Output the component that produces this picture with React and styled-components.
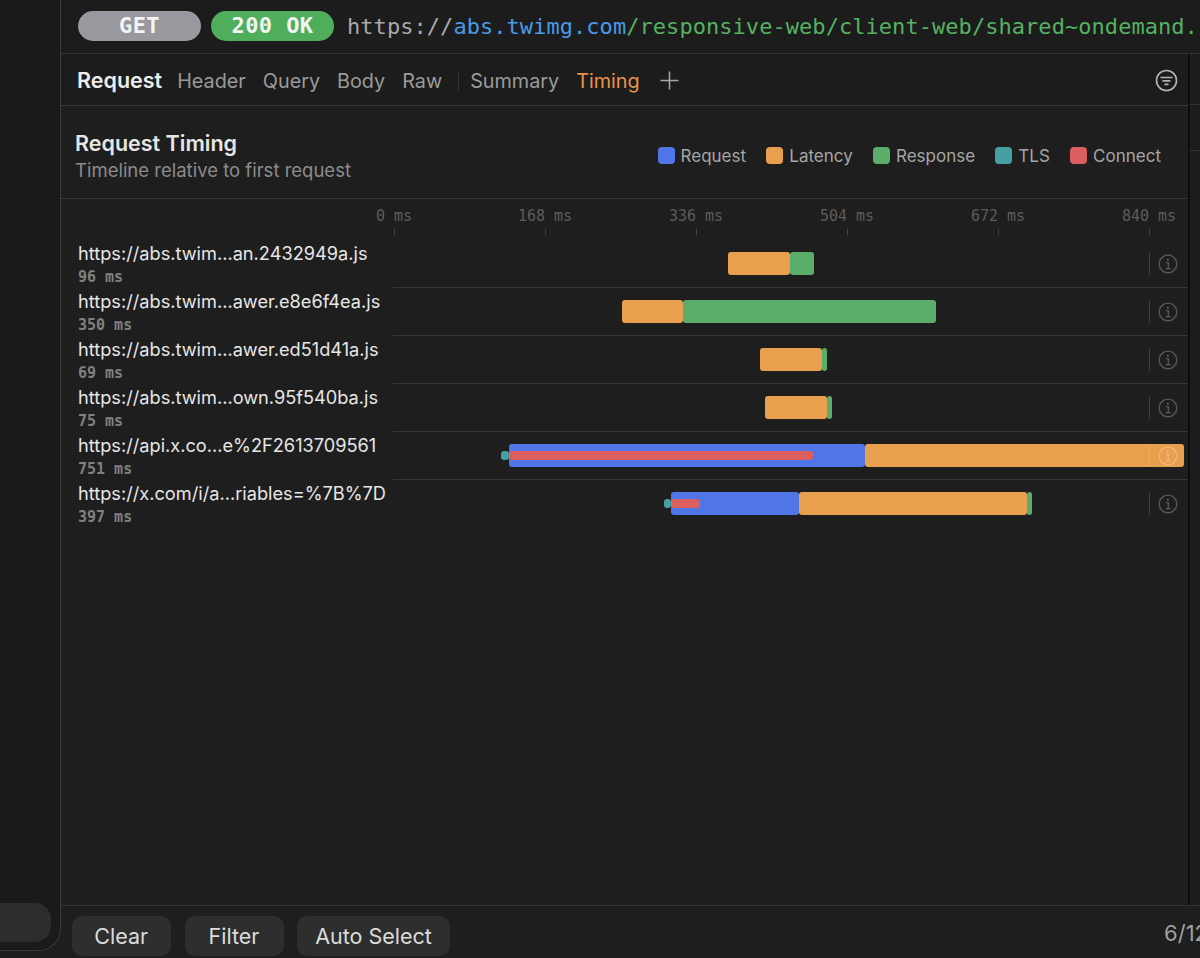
import React from "react";
import styled, { createGlobalStyle } from "styled-components";

const MONO = `"DejaVu Sans Mono", "Liberation Mono", monospace`;
const SANS = `Inter, "Liberation Sans", sans-serif`;

const COLORS = {
  request: "#4f75e6",
  latency: "#e8a04f",
  response: "#5bad69",
  tls: "#45a0a3",
  connect: "#dc5f60",
};

const LEGEND = [
  { kind: "request", label: "Request" },
  { kind: "latency", label: "Latency" },
  { kind: "response", label: "Response" },
  { kind: "tls", label: "TLS" },
  { kind: "connect", label: "Connect" },
];

const TICKS = ["0 ms", "168 ms", "336 ms", "504 ms", "672 ms", "840 ms"];

// from / to are x positions inside the track, track starts at x=393
const ROWS = [
  {
    url: "https://abs.twim…an.2432949a.js",
    time: "96 ms",
    bars: [
      { kind: "latency", from: 335, to: 397 },
      { kind: "response", from: 397, to: 421 },
    ],
  },
  {
    url: "https://abs.twim…awer.e8e6f4ea.js",
    time: "350 ms",
    bars: [
      { kind: "latency", from: 229, to: 290 },
      { kind: "response", from: 290, to: 543 },
    ],
  },
  {
    url: "https://abs.twim…awer.ed51d41a.js",
    time: "69 ms",
    bars: [
      { kind: "latency", from: 367, to: 429 },
      { kind: "response", from: 429, to: 434 },
    ],
  },
  {
    url: "https://abs.twim…own.95f540ba.js",
    time: "75 ms",
    bars: [
      { kind: "latency", from: 372, to: 434 },
      { kind: "response", from: 434, to: 439 },
    ],
  },
  {
    url: "https://api.x.co…e%2F2613709561",
    time: "751 ms",
    bars: [
      { kind: "tls", from: 108, to: 116, thin: true },
      { kind: "request", from: 116, to: 472 },
      { kind: "latency", from: 472, to: 791 },
      { kind: "connect", from: 116, to: 420, thin: true },
    ],
  },
  {
    url: "https://x.com/i/a…riables=%7B%7D",
    time: "397 ms",
    bars: [
      { kind: "tls", from: 271, to: 278, thin: true },
      { kind: "request", from: 278, to: 406 },
      { kind: "latency", from: 406, to: 634 },
      { kind: "response", from: 634, to: 639 },
      { kind: "connect", from: 278, to: 307, thin: true },
    ],
  },
];

function InfoIcon() {
  return (
    <svg width="20" height="20" viewBox="0 0 20 20" fill="none" stroke="currentColor">
      <circle cx="10" cy="10" r="8.8" strokeWidth="1.3" />
      <circle cx="9.8" cy="5.8" r="1.1" fill="currentColor" stroke="none" />
      <path d="M8 8.6h2.3v6M7.7 14.7h5" strokeWidth="1.3" />
    </svg>
  );
}

function FilterIcon() {
  return (
    <svg width="23" height="23" viewBox="0 0 23 23" fill="none" stroke="#b4b4b4">
      <circle cx="11.5" cy="11.5" r="10" strokeWidth="1.6" />
      <path d="M5.5 8.5h12M7.5 11.9h8M9.5 15.3h4" strokeWidth="1.7" />
    </svg>
  );
}

function PlusIcon() {
  return (
    <svg width="19" height="19" viewBox="0 0 19 19" stroke="#a8a8a8" strokeWidth="1.5">
      <path d="M9.5 0.5v18M0.5 9.5h18" />
    </svg>
  );
}

export default function App() {
  return (
    <>
      <GlobalStyle />
      <Page>
        <Sidebar>
          <SearchPill />
        </Sidebar>
        <Main>
          <TopBar>
            <Pill $bg="#98989e">GET</Pill>
            <Pill $bg="#4fae5b">200 OK</Pill>
            <Url>
              https://<UrlHost>abs.twimg.com</UrlHost>
              <UrlPath>/responsive-web/client-web/shared~ondemand.</UrlPath>
            </Url>
          </TopBar>
          <Body>
            <Panel>
              <Tabs>
                <ActiveTab>Request</ActiveTab>
                <Tab $ml={15}>Header</Tab>
                <Tab>Query</Tab>
                <Tab>Body</Tab>
                <Tab>Raw</Tab>
                <TabDivider />
                <Tab $ml={0}>Summary</Tab>
                <Tab $color="#e9924a">Timing</Tab>
                <PlusWrap>
                  <PlusIcon />
                </PlusWrap>
                <FilterWrap>
                  <FilterIcon />
                </FilterWrap>
              </Tabs>
              <Header>
                <div>
                  <Title>Request Timing</Title>
                  <Subtitle>Timeline relative to first request</Subtitle>
                </div>
                <Legend>
                  {LEGEND.map((item) => (
                    <LegendItem key={item.kind}>
                      <Swatch $kind={item.kind} />
                      {item.label}
                    </LegendItem>
                  ))}
                </Legend>
              </Header>
              <Ruler>
                {TICKS.map((tick) => (
                  <RulerCell key={tick}>
                    {tick}
                    <Tick />
                  </RulerCell>
                ))}
              </Ruler>
              {ROWS.map((row, i) => (
                <Row key={row.url}>
                  <RowLabel>
                    <RowUrl>{row.url}</RowUrl>
                    <RowTime>{row.time}</RowTime>
                  </RowLabel>
                  <Track $last={i === ROWS.length - 1}>
                    {row.bars.map((bar) => (
                      <Bar
                        key={bar.kind}
                        $kind={bar.kind}
                        $thin={bar.thin}
                        style={{ left: bar.from, width: bar.to - bar.from }}
                      />
                    ))}
                    <InfoSlot>
                      <InfoIcon />
                    </InfoSlot>
                  </Track>
                </Row>
              ))}
            </Panel>
            <SideStub>
              <StubLine $h={51} />
              <StubLine $h={46} />
            </SideStub>
          </Body>
          <Footer>
            <FooterButton $w={99.5}>Clear</FooterButton>
            <FooterButton $w={99}>Filter</FooterButton>
            <FooterButton $w={153}>Auto Select</FooterButton>
            <Count>6/12</Count>
          </Footer>
        </Main>
      </Page>
    </>
  );
}

const GlobalStyle = createGlobalStyle`
  html, body {
    margin: 0;
    padding: 0;
    background: #1e1e1e;
  }
`;

const Page = styled.div`
  width: 1200px;
  height: 958px;
  display: flex;
  overflow: hidden;
  background: #1e1e1e;
  font-family: ${SANS};
`;

const Sidebar = styled.div`
  box-sizing: border-box;
  width: 61px;
  height: 951px;
  flex-shrink: 0;
  display: flex;
  flex-direction: column;
  justify-content: flex-end;
  padding-bottom: 8px;
  background: #1a1a1a;
  border-right: 1px solid #3a3a3a;
  border-bottom: 1px solid #3a3a3a;
  border-bottom-right-radius: 22px;
`;

const SearchPill = styled.div`
  width: 51px;
  height: 39px;
  background: #2d2d2d;
  border-radius: 0 16px 16px 0;
`;

const Main = styled.div`
  flex: 1;
  min-width: 0;
  display: flex;
  flex-direction: column;
`;

const TopBar = styled.div`
  box-sizing: border-box;
  height: 54px;
  flex-shrink: 0;
  display: flex;
  align-items: flex-start;
  gap: 10px;
  padding: 11px 0 0 17px;
  background: #1c1c1c;
  border-bottom: 1px solid #333;
  overflow: hidden;
  white-space: nowrap;
`;

const Pill = styled.div`
  width: 123px;
  height: 30px;
  flex-shrink: 0;
  border-radius: 15px;
  background: ${(p) => p.$bg};
  color: #f4f4f4;
  font: 700 22px/30px ${MONO};
  letter-spacing: 0.4px;
  text-align: center;
`;

const Url = styled.div`
  margin: 1px 0 0 3px;
  color: #a9a9a9;
  font: 400 22px/30px ${MONO};
  letter-spacing: 0.05px;
`;

const UrlHost = styled.span`
  color: #4a9ae6;
`;

const UrlPath = styled.span`
  color: #55b162;
`;

const Body = styled.div`
  flex: 1;
  min-height: 0;
  display: flex;
`;

const Panel = styled.div`
  flex: 1;
  min-width: 0;
  border-right: 2px solid #0c0c0c;
`;

const Tabs = styled.div`
  box-sizing: border-box;
  height: 52px;
  display: flex;
  align-items: center;
  padding: 2px 10px 0 16px;
  background: #1c1c1c;
  border-bottom: 1px solid #383838;
`;

const ActiveTab = styled.div`
  margin-top: -2px;
  color: #ececec;
  font-size: 21.5px;
  font-weight: 600;
`;

const Tab = styled.div`
  margin-left: ${(p) => p.$ml ?? 17}px;
  color: ${(p) => p.$color || "#9a9a9a"};
  font-size: 19.8px;
`;

const TabDivider = styled.div`
  width: 1px;
  height: 20px;
  margin: 0 11px 0 16px;
  background: #333;
`;

const PlusWrap = styled.div`
  display: flex;
  margin-left: 20px;
`;

const FilterWrap = styled.div`
  display: flex;
  margin-left: auto;
`;

const Header = styled.div`
  box-sizing: border-box;
  height: 93px;
  display: flex;
  align-items: center;
  justify-content: space-between;
  padding: 7px 27px 0 14px;
  border-bottom: 1px solid #383838;
`;

const Title = styled.div`
  color: #e6e6e6;
  font-size: 21.5px;
  line-height: 28px;
  font-weight: 600;
`;

const Subtitle = styled.div`
  color: #8c8c8c;
  font-size: 18.5px;
  line-height: 26px;
`;

const Legend = styled.div`
  display: flex;
  gap: 20.25px;
`;

const LegendItem = styled.div`
  display: flex;
  align-items: center;
  gap: 6px;
  color: #a6a6a6;
  font-size: 17px;
`;

const Swatch = styled.span`
  width: 17px;
  height: 17px;
  border-radius: 4px;
  background: ${(p) => COLORS[p.$kind]};
`;

const Ruler = styled.div`
  height: 41px;
  display: flex;
  padding-left: 257.5px;
`;

const RulerCell = styled.div`
  width: 151px;
  flex-shrink: 0;
  display: flex;
  flex-direction: column;
  align-items: center;
  padding-top: 8px;
  box-sizing: border-box;
  color: #5c5c5c;
  font: 400 15px/18px ${MONO};
`;

const Tick = styled.div`
  width: 1px;
  height: 6px;
  margin-top: 4px;
  background: #444;
`;

const Row = styled.div`
  height: 48px;
  display: flex;
`;

const RowLabel = styled.div`
  box-sizing: border-box;
  width: 332px;
  flex-shrink: 0;
  padding: 1px 0 0 17px;
  white-space: nowrap;
`;

const RowUrl = styled.div`
  color: #e6e6e6;
  font-size: 18.2px;
  line-height: 24px;
`;

const RowTime = styled.div`
  margin-top: 2px;
  color: #808080;
  font: 700 15px/20px ${MONO};
`;

const Track = styled.div`
  position: relative;
  flex: 1;
  box-sizing: border-box;
  border-bottom: ${(p) => (p.$last ? "none" : "1.5px solid #383838")};
`;

const Bar = styled.div`
  position: absolute;
  top: ${(p) => (p.$thin ? 19 : 12)}px;
  height: ${(p) => (p.$thin ? 9 : 23)}px;
  border-radius: 3px;
  background: ${(p) => COLORS[p.$kind]};
`;

const InfoSlot = styled.div`
  position: absolute;
  top: 12px;
  right: 10px;
  height: 23px;
  display: flex;
  align-items: center;
  gap: 8px;
  color: rgba(255, 255, 255, 0.27);

  &::before {
    content: "";
    width: 1px;
    height: 23px;
    background: rgba(255, 255, 255, 0.14);
  }
`;

const SideStub = styled.div`
  width: 10px;
  flex-shrink: 0;
  background: #1c1c1c;
`;

const StubLine = styled.div`
  height: ${(p) => p.$h}px;
  box-sizing: border-box;
  border-bottom: 1px solid #333;
`;

const Footer = styled.div`
  box-sizing: border-box;
  height: 53px;
  flex-shrink: 0;
  display: flex;
  gap: 13.5px;
  padding: 10px 0 0 10.5px;
  border-top: 1px solid #333;
`;

const FooterButton = styled.div`
  width: ${(p) => p.$w}px;
  height: 40px;
  flex-shrink: 0;
  border-radius: 10px;
  background: #2e2e2e;
  color: #dcdcdc;
  font-size: 21.5px;
  line-height: 40px;
  text-align: center;
`;

const Count = styled.div`
  margin-left: auto;
  margin-right: -8px;
  color: #a0a0a0;
  font-size: 22px;
  line-height: 34px;
  white-space: nowrap;
`;
